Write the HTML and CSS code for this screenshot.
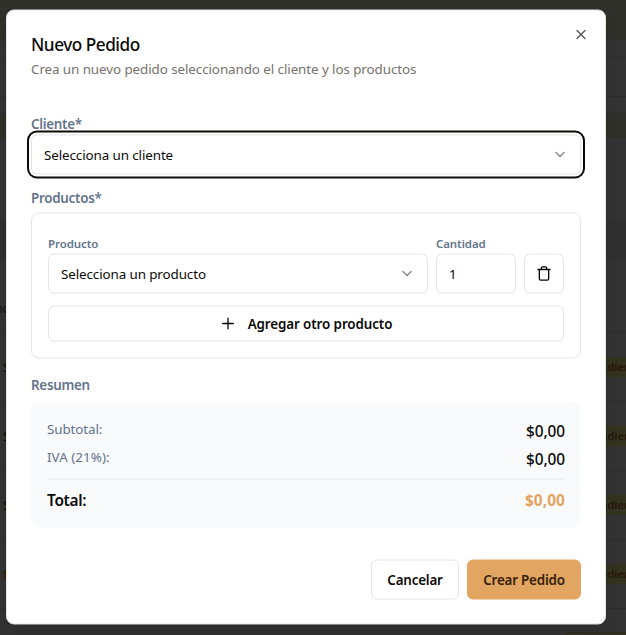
FILE: index.html
```html
<!DOCTYPE html>
<html lang="es">
<head>
<meta charset="utf-8">
<title>Nuevo Pedido</title>
<link rel="stylesheet" href="styles.css">
</head>
<body>
<div class="backdrop" aria-hidden="true">
  <div class="band band-top"></div>
  <div class="band band-nav"></div>
  <div class="band band-head"></div>
  <div class="band band-sub"></div>
  <div class="band band-tint"></div>
  <div class="band band-gap"></div>
  <div class="band band-filter"></div>
  <div class="row row-head"><span>no</span></div>
  <div class="row"><span class="name">S</span><span class="badge">ndiente</span></div>
  <div class="row"><span class="name">S</span><span class="badge">ndiente</span></div>
  <div class="row"><span class="name">S</span><span class="badge">ndiente</span></div>
  <div class="row"><span class="name name-alt">M</span><span class="badge">ndiente</span></div>
  <div class="band band-last"></div>
</div>
<main class="dialog" role="dialog">
  <button class="close" aria-label="Cerrar">
    <svg width="16" height="16" viewBox="0 0 24 24"><path d="M18 6 6 18M6 6l12 12"/></svg>
  </button>
  <header class="header">
    <h2 class="title">Nuevo Pedido</h2>
    <p class="desc">Crea un nuevo pedido seleccionando el cliente y los productos</p>
  </header>
  <section class="client">
    <label class="label">Cliente*</label>
    <div class="control select focused">
      <span>Selecciona un cliente</span>
      <svg class="chev" width="16" height="16" viewBox="0 0 24 24"><path d="m6 9 6 6 6-6"/></svg>
    </div>
  </section>
  <section class="products">
    <label class="label">Productos*</label>
    <div class="card">
      <div class="item">
        <div class="field grow">
          <label class="label small">Producto</label>
          <div class="control select">
            <span>Selecciona un producto</span>
            <svg class="chev" width="16" height="16" viewBox="0 0 24 24"><path d="m6 9 6 6 6-6"/></svg>
          </div>
        </div>
        <div class="field qty">
          <label class="label small">Cantidad</label>
          <div class="control"><span>1</span></div>
        </div>
        <button class="control trash" aria-label="Eliminar">
          <svg width="16" height="16" viewBox="0 0 24 24"><path d="M3 6h18M19 6v14c0 1-1 2-2 2H7c-1 0-2-1-2-2V6M8 6V4c0-1 1-2 2-2h4c1 0 2 1 2 2v2"/></svg>
        </button>
      </div>
      <button class="control add">
        <svg width="16" height="16" viewBox="0 0 24 24"><path d="M4 12h16M12 4v16"/></svg>
        <span>Agregar otro producto</span>
      </button>
    </div>
  </section>
  <section class="summary">
    <h3 class="label">Resumen</h3>
    <div class="totals">
      <div class="line"><span class="key">Subtotal:</span><span class="amount">$0,00</span></div>
      <div class="line"><span class="key key-tax">IVA (21%):</span><span class="amount">$0,00</span></div>
      <div class="line total"><span>Total:</span><span class="amount grand">$0,00</span></div>
    </div>
  </section>
  <footer class="footer">
    <button class="control btn cancel">Cancelar</button>
    <button class="control btn create">Crear Pedido</button>
  </footer>
</main>
</body>
</html>
```
FILE: styles.css
```css
* { box-sizing: border-box; margin: 0; padding: 0; }
body {
  height: 635px;
  overflow: hidden;
  background: #333;
  color: #0c0a09;
  font: 13.4px/21px "Noto Sans", "Open Sans", sans-serif;
  letter-spacing: -.1px;
}
button { font: inherit; color: inherit; letter-spacing: inherit; }
svg { display: block; fill: none; stroke: currentColor; stroke-width: 2; stroke-linecap: round; stroke-linejoin: round; flex: none; }

.backdrop { position: absolute; inset: 0; overflow: hidden; display: flex; flex-direction: column; }
.band { flex: none; }
.band-top { height: 41px; background: #30302b; }
.band-nav { height: 17px; border-bottom: 1px solid #2d2d2d; }
.band-head { height: 39px; border-bottom: 1px solid #2d2d2d; }
.band-sub { height: 17px; border-bottom: 1px solid #2d2d2d; }
.band-tint { height: 24px; background: #30302b; }
.band-gap { height: 82px; }
.band-filter { height: 40px; background: #303030; }
.row { flex: none; height: 69px; border-bottom: 1px solid #2d2d2d; display: flex; align-items: center; justify-content: space-between; font-size: 12px; }
.row-head { height: 73px; padding-top: 24px; font-weight: 600; color: #1c1917; }
.row-head span { margin-left: -5px; }
.name { margin-left: 3px; color: #160c06; }
.name-alt { color: #3a1d05; font-weight: 700; }
.badge { width: 30px; height: 20px; padding-left: 4px; background: #33321f; color: #24170c; font-weight: 600; font-size: 11.5px; line-height: 20px; white-space: nowrap; }
.band-last { height: 25px; margin: 0 0 0 565px; border-bottom: 2px solid #302f1e; }

.dialog {
  position: relative;
  width: 600px;
  height: 615px;
  margin: 10px 0 0 6px;
  padding: 24px;
  border: 1px solid #e5e5e5;
  border-radius: 8px;
  background: #fff;
  transform: translateY(-.5px);
  box-shadow: 0 10px 15px -3px rgba(0,0,0,.15);
  display: flex;
  flex-direction: column;
}
.close { position: absolute; top: 16px; right: 16px; border: 0; background: none; color: #555; }
.title { height: 18px; font-size: 17.2px; line-height: 19px; font-weight: 550; letter-spacing: -.48px; }
.desc { margin-top: 6px; height: 20px; line-height: 20px; color: #78716c; letter-spacing: -.08px; }
.client { margin-top: 36px; }
.label { display: block; height: 20px; line-height: 18px; font-size: 13.4px; font-weight: 560; letter-spacing: -.28px; color: #64748b; }
.small { font-size: 11.5px; line-height: 20px; letter-spacing: -.1px; }
.control { height: 40px; border: 1px solid #e5e5e5; border-radius: 6px; background: #fff; display: flex; align-items: center; padding: 0 12px; }
.select { justify-content: space-between; }
.chev { color: #858585; }
.focused { box-shadow: 0 0 0 2px #fff, 0 0 0 4px #0c0a09; }
.products { margin-top: 14px; }
.products > .label { height: 24px; line-height: 18px; }
.card { height: 146px; padding: 0 16px 16px; border: 1px solid #e5e5e5; border-radius: 8px; display: flex; flex-direction: column; justify-content: flex-end; gap: 12px; }
.item { display: flex; align-items: flex-end; gap: 8px; }
.grow { flex: 1; }
.qty { width: 80px; }
.trash { width: 40px; padding: 0 11px; }
.add { height: 36px; justify-content: center; gap: 12px; font-weight: 560; letter-spacing: -.1px; }
.summary { margin-top: 16px; }
.summary > .label { height: 28px; line-height: 21px; }
.totals { padding: 16px; height: 125px; border-radius: 8px; background: #f8fafc; display: flex; flex-direction: column; gap: 4px; }
.line { display: flex; justify-content: space-between; height: 24px; }
.key { color: #64748b; }
.key-tax { letter-spacing: .05px; }
.amount { font-size: 15.4px; line-height: 25px; font-weight: 540; letter-spacing: -.1px; }
.total { margin-top: 4px; height: 33px; padding-top: 8px; border-top: 1px solid #e5e7eb; font-size: 15.4px; line-height: 25px; font-weight: 560; letter-spacing: -.3px; }
.grand { color: #e2a562; font-weight: 700; letter-spacing: .1px; }
.footer { margin-top: auto; display: flex; justify-content: flex-end; gap: 8px; }
.btn { justify-content: center; font-weight: 560; letter-spacing: -.2px; }
.cancel { width: 88px; }
.create { width: 114px; background: #e2a562; border-color: #e2a562; color: #35200c; }
```
